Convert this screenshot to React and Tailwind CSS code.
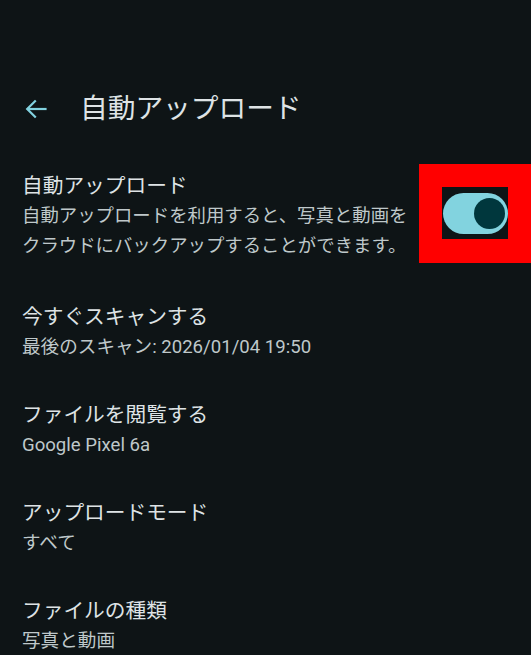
import React from 'react';

const FONT = { fontFamily: 'Roboto, "Noto Sans CJK JP", sans-serif' };

const items = [
  { title: '今すぐスキャンする', sub: '最後のスキャン: 2026/01/04 19:50' },
  { title: 'ファイルを閲覧する', sub: 'Google Pixel 6a' },
  { title: 'アップロードモード', sub: 'すべて' },
  { title: 'ファイルの種類', sub: '写真と動画' },
];

function BackArrow() {
  return (
    <svg width="22" height="20" viewBox="0 0 22 20" fill="none" stroke="#82d2e0" strokeWidth="2.2" strokeLinecap="square">
      <path d="M20.5 10H3" />
      <path d="M10 2.2L2.2 10L10 17.8" />
    </svg>
  );
}

function Toggle() {
  // red highlight box around the switch
  return (
    <div className="-mt-[2px] mb-[2px] bg-[#ff0000] p-[23px] pb-[24px]">
      <div className="w-[66px] h-[52px] bg-[#0e1416] flex items-center">
        <div className="ml-[1px] w-[65px] h-[41px] rounded-full bg-[#82d3df] flex items-center justify-end pr-[3px]">
          <div className="w-[31px] h-[31px] rounded-full bg-[#00373d]" />
        </div>
      </div>
    </div>
  );
}

export default function App() {
  return (
    <div className="w-[531px] h-[655px] overflow-hidden bg-[#0e1416]" style={FONT}>
      <div className="pt-[81px]">
        <div className="h-[56px] flex items-center pl-[25px]">
          <BackArrow />
          <span className="ml-[33px] text-[27.7px] text-[#dee3e5] leading-[36px]">自動アップロード</span>
        </div>
      </div>

      <div className="mt-[11px]">
        <div className="flex items-center pl-[22px] py-[18px]">
          <div className="flex-1">
            <div className="text-[20.7px] leading-[30px] text-[#dee3e5]">自動アップロード</div>
            <div className="text-[18.4px] leading-[30px] text-[#bfc8ca]">
              自動アップロードを利用すると、写真と動画を
              <br />
              クラウドにバックアップすることができます。
            </div>
          </div>
          <Toggle />
        </div>

        {items.map((it) => (
          <div key={it.title} className="pl-[22px] py-[19px]">
            <div className="text-[20.7px] leading-[30px] text-[#dee3e5]">{it.title}</div>
            <div className="text-[18.6px] leading-[30px] text-[#bfc8ca]">{it.sub}</div>
          </div>
        ))}
      </div>
    </div>
  );
}
